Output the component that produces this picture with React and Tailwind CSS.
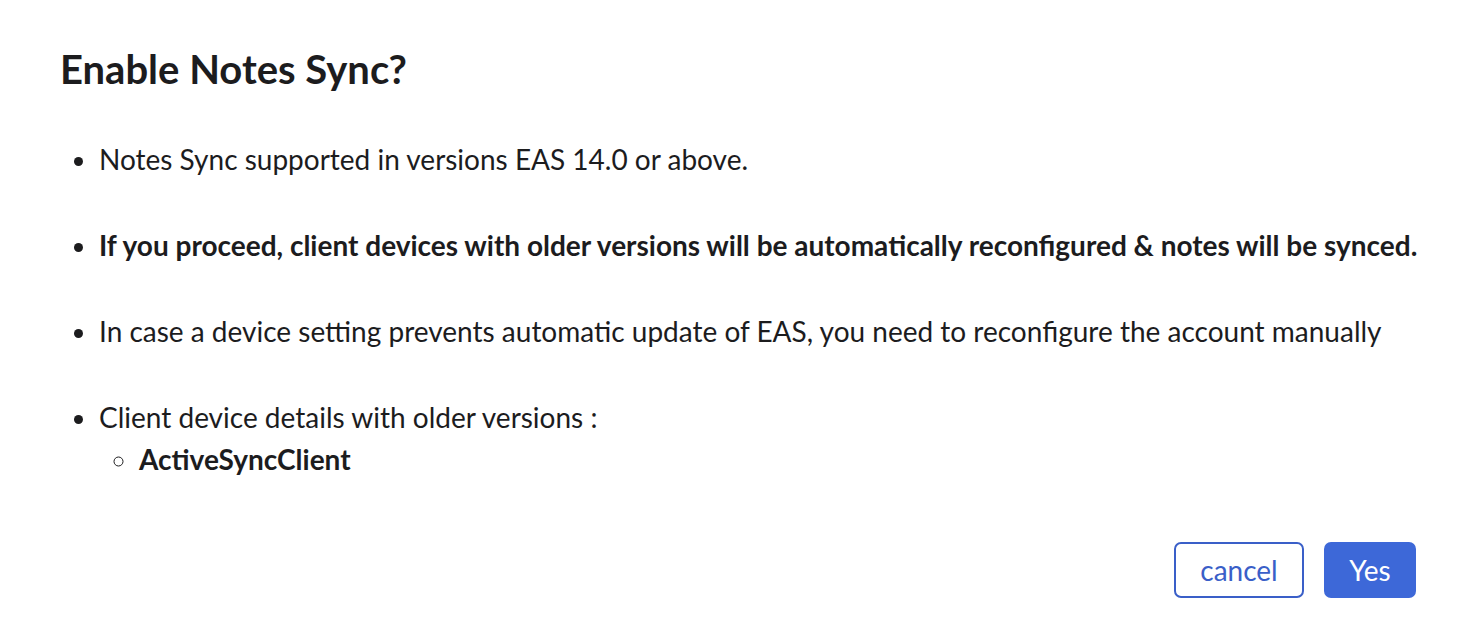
import React from 'react';

const App = () => {
  return (
    <div className="w-[1464px] h-[636px] bg-white text-[#1c1c1e] font-['Lato',sans-serif] flex flex-col pl-[60px] pr-[40px] pt-[42px]">
      <h1 className="text-[40px] font-bold leading-[54px]">Enable Notes Sync?</h1>

      <ul className="mt-[42px] list-disc pl-[39px] text-[28px] leading-[42px] flex flex-col gap-[44px]">
        <li>Notes Sync supported in versions EAS 14.0 or above.</li>
        <li className="font-bold whitespace-nowrap">If you proceed, client devices with older versions will be automatically reconfigured &amp; notes will be synced.</li>
        <li>In case a device setting prevents automatic update of EAS, you need to reconfigure the account manually</li>
        <li>
          Client device details with older versions :
          <ul className="list-[circle] pl-[40px]">
            <li className="font-bold">ActiveSyncClient</li>
          </ul>
        </li>
      </ul>

      <div className="mt-auto mb-[38px] mr-[8px] flex justify-end gap-[20px]">
        <button className="h-[56px] w-[130px] rounded-[7px] border-2 border-[#3a5fc8] text-[#3a5fc8] text-[28px] leading-none">cancel</button>
        <button className="h-[56px] w-[92px] rounded-[7px] bg-[#3d68d8] text-white text-[28px] leading-none">Yes</button>
      </div>
    </div>
  );
};

export default App;
